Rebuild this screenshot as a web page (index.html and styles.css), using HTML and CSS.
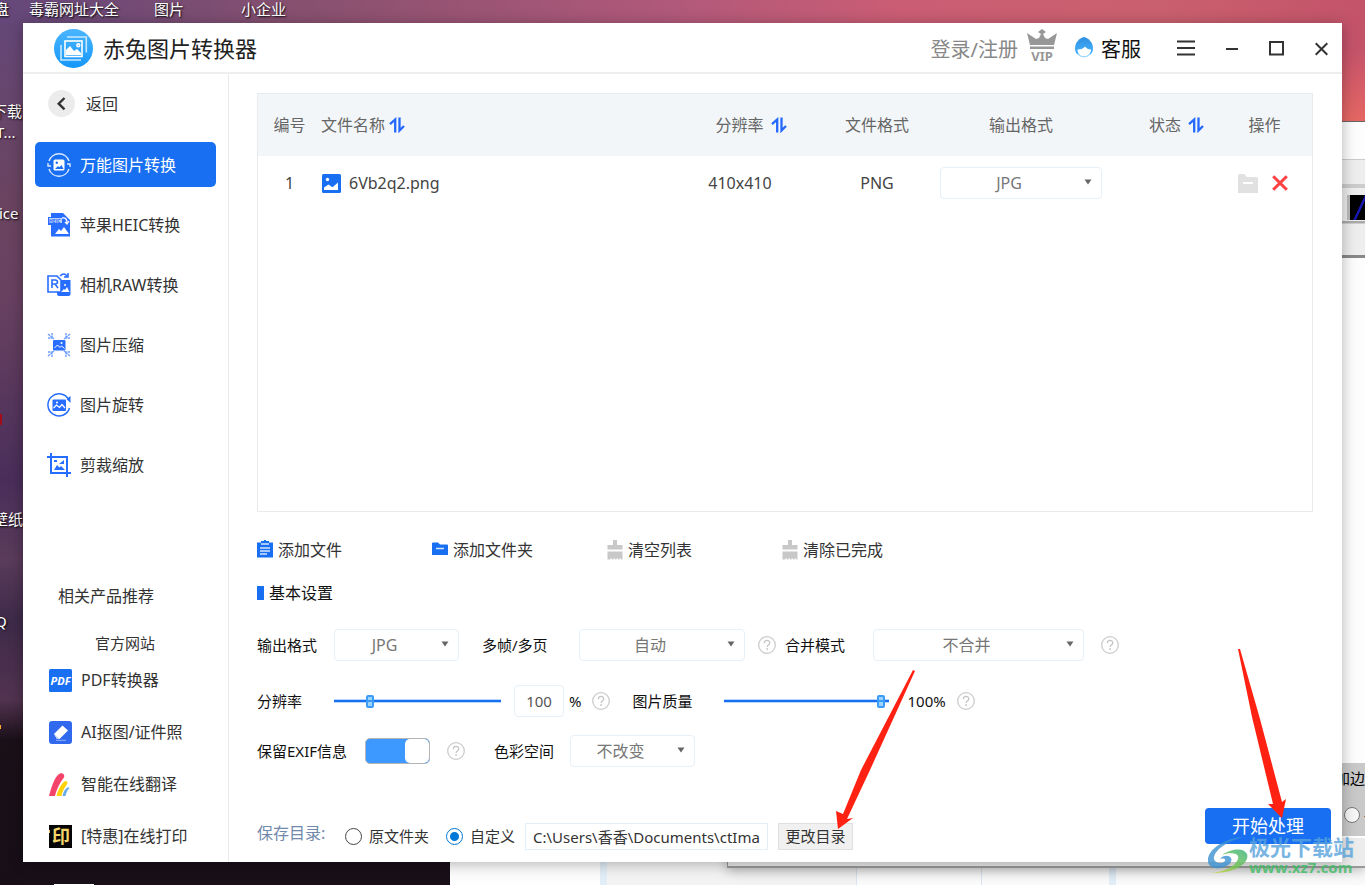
FILE: index.html
```html
<!DOCTYPE html>
<html lang="zh-CN">
<head>
<meta charset="utf-8">
<title>赤兔图片转换器</title>
<link rel="stylesheet" href="styles.css">
</head>
<body>
<svg class="defs" aria-hidden="true">
  <defs>
    <linearGradient id="logoFill" x1="0" y1="0" x2="0" y2="1"><stop offset="0" stop-color="#4ab5ff"/><stop offset="1" stop-color="#1597f7"/></linearGradient>
    <linearGradient id="hairFill" x1="0" y1="0" x2="0" y2="1"><stop offset="0" stop-color="#2f8fe0"/><stop offset="1" stop-color="#45b4ff"/></linearGradient>
    <linearGradient id="leafFill" x1="0" y1="1" x2="1" y2="0"><stop offset="0" stop-color="#d8d63c"/><stop offset=".5" stop-color="#6fc452"/><stop offset="1" stop-color="#2fae7a"/></linearGradient>
    <symbol id="sort" viewBox="0 0 16 16"><path d="M6.200 15.500V2.500L1 7.200" fill="none" stroke="#2468ff" stroke-width="2.300"/><path d="M10.500.5V13.500L15 9" fill="none" stroke="#2468ff" stroke-width="2.300"/></symbol>
    <symbol id="caret" viewBox="0 0 8 6"><path d="M.5.5h7L4 5.500z" fill="#666"/></symbol>
    <symbol id="help" viewBox="0 0 18 18"><circle cx="9" cy="9" r="8.300" fill="none" stroke="#ccc" stroke-width="1.300"/><path d="M6.300 7.200C6.300 3.600 11.700 3.600 11.700 7c0 2-2.600 2-2.600 4" fill="none" stroke="#c4c4c4" stroke-width="1.300"/><circle cx="9.100" cy="13" r=".9" fill="#c4c4c4"/></symbol>
    <symbol id="brush" viewBox="0 0 16 20"><path d="M6 0h4v5h5.500v4.500H.5V5H6zM.5 11.500h15V19.500h-1.500v-1h-1.500v1h-1.500v-1H9.500v1H8v-1H6.500v1H5v-1H3.500v1H.5z" fill="#c8c8c8"/></symbol>
  </defs>
</svg>
<div class="desktop">
  <span class="shortcut s1">盘</span>
  <span class="shortcut s2">毒霸网址大全</span>
  <span class="shortcut s3">图片</span>
  <span class="shortcut s4">小企业</span>
  <span class="shortcut s5">下载</span>
  <span class="shortcut s6">T...</span>
  <span class="shortcut s7">ice</span>
  <span class="shortcut s8">壁纸</span>
  <span class="shortcut s9">Q</span>
  <i class="speck speck-red"></i>
  <i class="speck speck-orange"></i>
  <i class="speck speck-white"></i>

  <div class="back-window">
    <div class="back-strip"></div>
    <div class="back-tools"><i class="back-swatch"></i></div>
    <div class="back-strip tall"></div>
  </div>
  <div class="back-grid"><i></i><i></i><i></i></div>
  <div class="back-dialog"></div>
  <div class="back-panel">
    <span>加边</span>
    <label class="back-option"><input type="radio" aria-label="加边">-</label>
  </div>

  <main class="window">
    <header class="titlebar">
      <svg class="logo" viewBox="0 0 39 39" aria-hidden="true"><circle cx="19.500" cy="19.500" r="19.500" fill="url(#logoFill)"/><g fill="none" stroke="#fff" stroke-width="1.600"><rect x="11" y="12" width="17" height="15.500"/><path d="M13 8h19.300v15.500M7 16v15h20" stroke="#c6e8ff"/><circle cx="24.300" cy="16.300" r="1.400"/></g><path d="M12 26v-5l4-4 4 5 3-2 4 4v2z" fill="#fff"/></svg>
      <h1>赤兔图片转换器</h1>
      <a class="login" href="#">登录/注册</a>
      <svg class="vip" viewBox="0 0 32 34" role="img" aria-label="VIP"><path d="M1 4l3 2 6 4 3-1 2-4-3-2 4-3 4 3-3 2 2 4 3 1 6-4 3-2-3 12H4zM4 17.500h24V20H4z" fill="#979797"/><text x="16" y="32" text-anchor="middle">VIP</text></svg>
      <a class="service" href="#"><svg viewBox="0 0 18 21" aria-hidden="true"><path d="M9 0C5 1 0 5 0 11.500 0 14 .8 16 2.500 17.500h13C17.200 16 18 14 18 11.500 18 5 13 1 9 0z" fill="url(#hairFill)"/><path d="M2.500 12.500c4 0 6-1 7.500-3 1.500 2 3.500 2.800 6 3 0 4-3 7-6.800 7S2.500 16.500 2.500 12.500z" fill="#fff"/><path d="M3 16.500c2.500 4.300 9.500 4.300 12 0M8 20h2" fill="none" stroke="#9bd3fb" stroke-width="1.200"/></svg>客服</a>
      <div class="controls">
        <button aria-label="菜单"><svg width="18" height="16" viewBox="0 0 18 16"><path d="M0 1.500h18M0 8h18M0 14.500h18"/></svg></button>
        <button aria-label="最小化"><svg width="12" height="16" viewBox="0 0 12 16"><path d="M0 9h12"/></svg></button>
        <button aria-label="最大化"><svg width="15" height="16" viewBox="0 0 15 16"><path d="M1 2h13v12.500H1z"/></svg></button>
        <button aria-label="关闭"><svg width="13" height="16" viewBox="0 0 13 16"><path d="M.7 3.200l11.600 11.600M12.300 3.200.7 14.800"/></svg></button>
      </div>
    </header>

    <div class="body">
      <aside class="sidebar">
        <button class="back"><svg viewBox="0 0 27 27" aria-hidden="true"><circle cx="13.500" cy="13.500" r="13.500" fill="#ececec"/><path d="M16.500 8l-5.800 5.700 5.800 5.700" fill="none" stroke="#333" stroke-width="2.400"/></svg>返回</button>
        <nav class="nav">
          <a class="active" href="#"><svg viewBox="0 0 24 24" aria-hidden="true"><path d="M2 8A10.500 10.500 0 0 1 22 8M22 16A10.500 10.500 0 0 1 2 16M1 10v3h3M23 14v-3h-3" fill="none" stroke="#dcebff" stroke-width="1.400"/><rect x="6.500" y="6.500" width="11" height="11" rx="1.500" fill="#fff"/><circle cx="9.800" cy="9.800" r="1.200" fill="#186ff2"/><path d="M8 16l3-3 1.500 1.300L14.500 12l2 4z" fill="#186ff2"/></svg>万能图片转换</a>
          <a href="#"><svg viewBox="0 0 24 24" aria-hidden="true"><path d="M4 0h12l7 7v16.500H4V12H1V4h3z" fill="#276dff"/><path d="M2 5h13v5H2z" fill="#b8ceff"/><text class="tiny" x="2" y="10">HEIC</text><path d="M15 5c4-1 5 2 5 5M18 9l2 2 2-3" fill="none" stroke="#fff" stroke-width="1.300"/><path d="M8 21l4-5 2 2 3-4 5 7z" fill="#fff"/></svg>苹果HEIC转换</a>
          <a href="#"><svg viewBox="0 0 24 24" aria-hidden="true"><path d="M10 10l2-3h11.500v14q0 2-2 2H12q-2 0-2-2z" fill="#276dff"/><path d="M1 3h9l4 4v12H1z" fill="#fff" stroke="#276dff" stroke-width="1.600"/><path d="M5 15V7h3q2.500 0 2.500 2T8 11H5m3 0 3 4" fill="none" stroke="#276dff" stroke-width="1.600"/><path d="M13 3q4-4 7 0M21 0v4h-4" fill="none" stroke="#276dff" stroke-width="1.500"/><path d="M14 19l3-3 1 1 2-3 2.500 5z" fill="#fff"/><circle cx="18" cy="12" r="1" fill="#fff"/></svg>相机RAW转换</a>
          <a href="#"><svg viewBox="0 0 24 24" aria-hidden="true"><rect x="6" y="7" width="12.500" height="10.500" rx="1" fill="#276dff"/><path d="M7.500 15l3-3 2.500 2.500 1.500-1.500 3 2.500" stroke="#fff" fill="none"/><circle cx="14.500" cy="10" r="1" fill="#fff"/><g fill="none" stroke="#70a0ff" stroke-width="1.400" stroke-dasharray="2.500 .6"><path d="M1 1l6 5M1 5h5M5 0v6M23 1l-6 5M23 5h-5M19 0v6M1 23l6-5M1 19h5M5 24v-6M23 23l-6-5M23 19h-5M19 24v-6"/></g></svg>图片压缩</a>
          <a href="#"><svg viewBox="0 0 24 24" aria-hidden="true"><path d="M21.800 7A11 11 0 1 0 22.500 15" fill="none" stroke="#276dff" stroke-width="1.500"/><path d="M23.500 3v7l-4-4z" fill="#276dff"/><rect x="5.500" y="6.500" width="13.500" height="11.500" rx="1" fill="#276dff"/><path d="M6.500 15l3-3 3 2.500 2.500-3 3 3.500" stroke="#fff" fill="none" stroke-width="1.200"/><circle cx="10" cy="9.500" r="1" fill="#fff"/></svg>图片旋转</a>
          <a href="#"><svg viewBox="0 0 24 24" aria-hidden="true"><path d="M0 4h20v20M4 0v20h20" fill="none" stroke="#276dff" stroke-width="2"/><path d="M7 17l3-5 2.500 2.500L14 13l4 4z" fill="#276dff"/><path d="M12 11l5-4v4zM7 7h3v2H7z" fill="#276dff"/></svg>剪裁缩放</a>
        </nav>
        <section class="related">
          <h2>相关产品推荐</h2>
          <a class="official" href="#">官方网站</a>
          <a href="#"><svg viewBox="0 0 23 23" aria-hidden="true"><rect width="23" height="23" rx="1.500" fill="#186ff2"/><text class="pdf" x="11.500" y="16" text-anchor="middle">PDF</text></svg>PDF转换器</a>
          <a href="#"><svg viewBox="0 0 23 23" aria-hidden="true"><rect width="23" height="23" rx="3" fill="#3069ee"/><path d="M5 13l8.500-8.500 5.500 5-8.500 8.500H8z" fill="#fff"/><path d="M5 13l5.500 5H8z" fill="#b9cdfc"/><path d="M7 19.300h10" stroke="#91afff"/></svg>AI抠图/证件照</a>
          <a href="#"><svg viewBox="0 0 23 23" aria-hidden="true"><path d="M0 23C3 11 7 2 11 .5c3-1 5 1 4 4C12 8 8 15 6 23z" fill="#f5446a"/><path d="M7.500 23c2-8 6-14 9-15 2 0 2.500 2 1 4-2 3-4 6-5 11z" fill="#ffd20a"/><path d="M13.500 23c1-5 3-8 6-9l1 1c-2 2-3 4-4 8z" fill="#69aae8"/></svg>智能在线翻译</a>
          <a href="#"><svg viewBox="0 0 23 23" aria-hidden="true"><rect width="23" height="23" fill="#050505"/><text class="seal" x="12" y="18" text-anchor="middle">印</text><path d="M0 5h1v3H0z" fill="#e9ce63"/></svg>[特惠]在线打印</a>
        </section>
      </aside>

      <section class="main">
        <div class="content">
          <div class="filelist">
            <table>
              <colgroup><col class="c-no"><col><col class="c-res"><col class="c-type"><col class="c-out"><col class="c-state"><col class="c-ops"></colgroup>
              <thead><tr>
                <th>编号</th>
                <th class="name">文件名称 <svg class="sort"><use href="#sort"/></svg></th>
                <th class="res">分辨率 <svg class="sort wide"><use href="#sort"/></svg></th>
                <th>文件格式</th><th>输出格式</th>
                <th class="state">状态 <svg class="sort wide"><use href="#sort"/></svg></th>
                <th>操作</th>
              </tr></thead>
              <tbody><tr>
                <td>1</td>
                <td class="name"><span class="file"><svg viewBox="0 0 19 19" aria-hidden="true"><rect width="19" height="19" rx="1.500" fill="#186ff2"/><circle cx="5.500" cy="5.500" r="1.700" fill="#fff"/><path d="M2 16v-2.500l4.500-3 4 2.700L16 8.500V16z" fill="#fff"/></svg>6Vb2q2.png</span></td>
                <td>410x410</td><td>PNG</td>
                <td><span class="select"><select aria-label="输出格式"><option>JPG</option></select><svg><use href="#caret"/></svg></span></td>
                <td></td>
                <td><span class="ops"><button aria-label="打开文件夹"><svg width="20" height="19" viewBox="0 0 20 19"><path d="M0 2q0-2 2-2h4l3 3h9.500Q20 3 20 4.500V19H0z" fill="#e1e1e1"/><path d="M5 9h10" stroke="#fff" stroke-width="2"/></svg></button><button aria-label="删除"><svg width="16" height="16" viewBox="0 0 16 16"><path d="M1.200 1.200l13.600 13.600M14.800 1.200l-13.600 13.600" stroke="#ff4141" stroke-width="3"/></svg></button></span></td>
              </tr></tbody>
            </table>
          </div>

          <div class="toolbar">
            <button><svg viewBox="0 0 16 20" aria-hidden="true"><path d="M0 2.500h4V1h3V0h2v1h3v1.500h4v15H0z" fill="#186ff2"/><path d="M4 4h8M3 8h10M3 11h10M3 14h7" stroke="#d5e6ff" stroke-width="1.300"/></svg>添加文件</button>
            <button><svg viewBox="0 0 16 20" aria-hidden="true"><path d="M0 3.500q0-1 1-1h5l2 2h7q1 0 1 1v9.500H0z" fill="#186ff2"/><path d="M4 8.500h8" stroke="#d5e6ff" stroke-width="1.500"/></svg>添加文件夹</button>
            <button><svg aria-hidden="true"><use href="#brush"/></svg>清空列表</button>
            <button><svg aria-hidden="true"><use href="#brush"/></svg>清除已完成</button>
          </div>

          <h2 class="section-title">基本设置</h2>

          <div class="row">
            <label class="first" for="format">输出格式</label>
            <span class="select w-small"><select id="format"><option>JPG</option></select><svg><use href="#caret"/></svg></span>
            <label class="frames" for="frames">多帧/多页</label>
            <span class="select w-mid"><select id="frames"><option>自动</option></select><svg><use href="#caret"/></svg></span>
            <svg class="help"><use href="#help"/></svg>
            <label class="merge" for="merge">合并模式</label>
            <span class="select w-large"><select id="merge"><option>不合并</option></select><svg><use href="#caret"/></svg></span>
            <svg class="help far"><use href="#help"/></svg>
          </div>
          <div class="row second">
            <label class="first" for="scale">分辨率</label>
            <input class="slider" id="scale" type="range" value="20">
            <input class="percent" type="text" value="100" aria-label="分辨率百分比">
            <span class="unit">%</span>
            <svg class="help near"><use href="#help"/></svg>
            <label class="quality" for="quality">图片质量</label>
            <input class="slider" id="quality" type="range" value="97">
            <output class="quality-value" for="quality">100%</output>
            <svg class="help near"><use href="#help"/></svg>
          </div>
          <div class="row third">
            <label class="exif" for="exif">保留EXIF信息</label>
            <input class="switch" id="exif" type="checkbox" checked>
            <svg class="help far"><use href="#help"/></svg>
            <label class="space" for="space">色彩空间</label>
            <span class="select w-small"><select id="space"><option>不改变</option></select><svg><use href="#caret"/></svg></span>
          </div>
        </div>

        <footer class="footer">
          <div class="save">
            <span class="save-label">保存目录:</span>
            <label class="radio"><input type="radio" name="dir">原文件夹</label>
            <label class="radio"><input type="radio" name="dir" checked>自定义</label>
            <input class="path" type="text" value="C:\Users\香香\Documents\ctImage" aria-label="保存路径">
            <button class="change">更改目录</button>
          </div>
          <button class="start">开始处理</button>
        </footer>
      </section>
    </div>
  </main>

  <svg class="arrow arrow-a" width="80" height="160" viewBox="0 0 80 160" aria-hidden="true"><path d="M78 0 26 100 8 144 1 141 3 159 18 148 12 149 35 100 80 1z"/></svg>
  <svg class="arrow arrow-b" width="50" height="170" viewBox="0 0 50 170" aria-hidden="true"><path d="M0 0 14 68 35 155 30 155 44 169 48 150 44 153 22 70 2 0z"/></svg>
  <div class="mark">
    <svg viewBox="0 0 42 40" aria-hidden="true"><path d="M37 1C20 1 0 13 1 25c0 5 5 8 12 7 8-1 13-6 11-10-2-3-8-3-11 1 4-1 6 0 5 2-2 3-10 3-11-2C6 15 20 5 37 1z" fill="#3b92d2"/><path d="M15 19c6-5 21-9 25-1 3 9-12 20-36 19 12-1 24-6 27-14 2-6-8-7-16-4z" fill="url(#leafFill)"/></svg>
    <div><strong>极光下载站</strong><span>www.xz7.com</span></div>
  </div>
</div>
</body>
</html>
```

FILE: styles.css
```css
* { box-sizing: border-box; }
body { margin: 0; font: 16px/24px "Noto Sans", "Noto Sans CJK SC", sans-serif; color: #333; }
button, input, select { font: inherit; color: inherit; margin: 0; }
button { padding: 0; border: 0; background: none; cursor: pointer; }
a { color: inherit; text-decoration: none; }
h1, h2 { margin: 0; font-weight: 400; }
svg { flex: none; display: block; }
.defs { position: absolute; width: 0; height: 0; }

.desktop {
  position: relative; height: 100vh; overflow: hidden;
  background:
    linear-gradient(90deg, #64477a 0, #87506f 22%, #b2597a 50%, #ca5d74 66%, #c9606e 85%, #c4536a 100%) top / 100% 23px no-repeat,
    linear-gradient(#64477a 0, #6a4460 200px, #684161 300px, #4a2e5a 480px, #5a3b5b 560px, #3e2a4a 620px, #523350 700px, #1a1018 740px, #170e17 100%) left / 23px 100% no-repeat,
    linear-gradient(#c4536a 20px, #c4536a 50px, #e56763 121px) right top / 23px 121px no-repeat,
    #180f18;
}
.shortcut { position: absolute; font-size: 15px; line-height: 20px; color: #fff; white-space: nowrap; text-shadow: 1px 1px 2px #000; }
.s1 { left: -6px; top: -1px; }
.s2 { left: 29px; top: -1px; }
.s3 { left: 154px; top: -1px; }
.s4 { left: 241px; top: -1px; }
.s5 { left: -8px; top: 101px; }
.s6 { left: -4px; top: 122px; }
.s7 { left: -1px; top: 203px; }
.s8 { left: -7px; top: 509px; }
.s9 { left: -5px; top: 611px; }
.speck { position: absolute; }
.speck-red { left: 0; top: 414px; width: 2px; height: 11px; background: #a00c18; }
.speck-orange { left: 0; top: 725px; width: 1px; height: 4px; background: #ffa62b; }
.speck-white { left: 54px; bottom: 0; width: 40px; height: 1px; background: #fff; }

.back-window { position: absolute; left: 450px; right: 0; top: 121px; bottom: 0; background: #fdfdfd; padding-top: 37px; border-top: 1px solid #666; }
.back-strip { height: 26px; background: #eee; border-top: 1px solid #ccc; border-bottom: 1px solid #ccc; }
.back-tools { height: 38px; padding: 10px 0 0; background: #eee; border-bottom: 2px solid #aaa; border-top: 3px solid #ccc; display: flex; justify-content: flex-end; }
.back-swatch { width: 18px; height: 25px; margin-top: -3px; border-left: 3px solid #bbb; background: linear-gradient(115deg, #000 55%, #1818b0 57%, #1818b0 65%, #000 67%); }
.back-strip.tall { height: 35px; border-bottom: 3px solid #888; }
.back-grid { position: absolute; left: 600px; right: 0; bottom: 0; height: 24px; display: flex; background: #fafafa; border-left: 7px solid #e1edf7; }
.back-grid i { width: 250px; background: #f3f3f3; border-right: 1px solid #d9e4f0; }
.back-grid i + i { width: 125px; background: #fafafa; }
.back-grid i:last-child { width: 134px; border-right: 7px solid #e1edf7; }
.back-dialog { position: absolute; left: 727px; right: 0; bottom: 17px; height: 30px; background: #ececec; border: solid #999; border-width: 0 0 2px 1px; box-shadow: 0 3px 12px rgba(0,0,0,.25); }
.back-panel { position: absolute; right: 0; top: 763px; width: 30px; height: 75px; padding-top: 3px; background: #c9c9c9; border-bottom: 2px solid #fff; font-size: 15px; color: #000; white-space: nowrap; overflow: hidden; display: flex; flex-direction: column; gap: 13px; }
.back-option { display: flex; align-items: center; gap: 4px; padding-left: 9px; }
.back-option input { appearance: none; flex: none; width: 16px; height: 16px; border: 1px solid #777; border-radius: 50%; background: #f7f7f7; }

.window { position: absolute; inset: 23px; display: flex; flex-direction: column; background: #fff; box-shadow: 0 2px 14px rgba(0,0,0,.3); }
.titlebar { height: 51px; flex: none; display: flex; align-items: center; padding: 1px 14px 0 31px; border-bottom: 2px solid #eee; }
.logo { width: 39px; height: 39px; margin-right: 10px; }
.titlebar h1 { font-size: 22px; line-height: 32px; color: #222; margin-right: auto; }
.login { font-size: 20px; color: #888; padding-top: 3px; }
.vip { width: 32px; height: 34px; margin: 0 17px 4px 8px; }
.vip text { font: 700 13px "Noto Sans", sans-serif; fill: #979797; }
.service { display: flex; align-items: center; gap: 8px; font-size: 20px; color: #111; margin-right: 36px; padding-top: 3px; }
.service svg { width: 18px; height: 21px; margin-bottom: 4px; }
.controls { display: flex; align-items: center; gap: 31px; }
.controls svg { fill: none; stroke: #333; stroke-width: 2; }

.body { flex: 1; min-height: 0; display: flex; }
.sidebar { width: 206px; flex: none; display: flex; flex-direction: column; padding: 16px 12px 8px; border-right: 1px solid #e9e9e9; }
.back { display: flex; align-items: center; gap: 11px; margin-left: 13px; align-self: flex-start; }
.back svg { width: 27px; height: 27px; }
.nav { display: flex; flex-direction: column; gap: 15px; margin-top: 25px; }
.nav a { display: flex; align-items: center; gap: 9px; height: 45px; padding-left: 12px; border-radius: 5px; }
.nav svg { width: 24px; height: 24px; }
.nav .active { background: #186ff2; color: #fff; }
.tiny { font: 700 5px "Open Sans", sans-serif; fill: #276dff; }
.related { margin-top: auto; display: flex; flex-direction: column; gap: 16px; padding-left: 14px; }
.related h2 { font-size: 16px; padding-left: 9px; }
.related a { display: flex; align-items: center; gap: 9px; height: 36px; }
.related .official { font-size: 15px; line-height: 20px; height: 20px; margin: 9px 0 -7px 46px; }
.related svg { width: 23px; height: 23px; }
.pdf { font: italic 700 11px "Open Sans", sans-serif; fill: #fff; }
.seal { font: 700 18px "Noto Sans CJK SC", sans-serif; fill: #f3d66a; }

.main { flex: 1; min-width: 0; display: flex; flex-direction: column; }
.content { flex: 1; min-height: 0; display: flex; flex-direction: column; padding: 19px 29px 41px 28px; }
.filelist { flex: 1; border: 1px solid #e8eaec; }
table { width: 100%; table-layout: fixed; border-collapse: collapse; text-align: center; }
th, td { padding: 0; font-weight: 400; }
th { height: 62px; background: #f2f6f9; color: #666; }
td { height: 54px; color: #444; }
.c-no { width: 63px; }
.c-res { width: 148px; }
.c-type { width: 126px; }
.c-out { width: 162px; }
.c-state { width: 115px; }
.c-ops { width: 95px; }
.name { text-align: left; }
.res { padding-left: 22px; }
.state { padding-left: 34px; }
.sort { display: inline-block; width: 16px; height: 16px; vertical-align: -2px; }
.sort.wide { margin-left: 3px; }
.file { display: flex; align-items: center; gap: 8px; padding-left: 1px; }
.file svg { width: 19px; height: 19px; }
.ops { display: flex; align-items: center; justify-content: center; gap: 14px; padding-right: 4px; }

.select { position: relative; display: block; }
.select select { appearance: none; display: block; width: 100%; height: 32px; padding: 0 24px 0 0; border: 1px solid #e6f0f8; border-radius: 4px; background: #fff; color: #777; text-align: center; text-align-last: center; }
.select svg { position: absolute; right: 10px; top: 12px; width: 8px; height: 6px; pointer-events: none; }
.w-small { width: 125px; }
.w-mid { width: 166px; }
.w-large { width: 211px; }

.toolbar { display: flex; margin-top: 22px; }
.toolbar button { width: 175px; height: 32px; display: flex; align-items: center; gap: 5px; }
.toolbar svg { width: 16px; height: 20px; }
.section-title { display: flex; align-items: center; gap: 5px; margin-top: 15px; font-size: 16px; color: #111; }
.section-title::before { content: ""; width: 7px; height: 14px; background: #186ff2; }

.row { display: flex; align-items: center; height: 32px; margin-top: 24px; font-size: 15px; color: #111; white-space: nowrap; }
.row.third { margin-top: 18px; }
.row .select { font-size: 16px; }
.first { width: 77px; }
.frames { width: 97px; margin-left: 23px; }
.help { width: 18px; height: 18px; margin-left: 13px; }
.help.near { margin-left: 11px; }
.help.far { margin-left: 17px; }
.merge { width: 88px; margin-left: 9px; }
.slider { appearance: none; width: 167px; height: 14px; background: linear-gradient(#186ff2, #186ff2) center / 100% 2px no-repeat, linear-gradient(#b9d8ff, #b9d8ff) center / 100% 4px no-repeat; }
.slider::-webkit-slider-thumb { appearance: none; width: 8px; height: 13px; border: 2px solid #3d9bf8; border-radius: 2px; background: linear-gradient(#9bd5ff 35%, #3d9bf8 35% 60%, #9bd5ff 60%); }
#quality { width: 165px; }
.percent { width: 50px; height: 32px; margin-left: 13px; padding: 0; border: 1px solid #e6f0f8; border-radius: 4px; text-align: center; color: #555; }
.unit { margin-left: 5px; }
.quality { width: 92px; margin-left: 22px; }
.quality-value { margin-left: 18px; }
.exif { width: 108px; }
.switch { appearance: none; width: 65px; height: 26px; border: 1px solid #b5b5b5; border-radius: 5px; background: #b5b5b5; display: flex; justify-content: flex-start; overflow: hidden; }
.switch::after { content: ""; width: 24px; border-radius: 5px; background: #fff; }
.switch:checked { background: #3d98ff; justify-content: flex-end; }
.space { width: 76px; margin-left: 29px; }

.footer { display: flex; align-items: flex-end; justify-content: space-between; height: 54px; padding: 0 11px 12px 28px; font-size: 15px; white-space: nowrap; }
.save { display: flex; align-items: center; height: 28px; }
.save-label { width: 88px; padding-bottom: 7px; font-size: 16px; color: #7189ab; }
.radio { display: flex; align-items: center; gap: 7px; margin-right: 17px; }
.radio input { appearance: none; width: 17px; height: 17px; border: 1px solid #444; border-radius: 50%; }
.radio input:checked { border: 1px solid #0078d7; background: radial-gradient(circle, #0078d7 4px, #fff 5px); }
.radio + .radio { margin-right: 10px; }
.path { width: 243px; height: 27px; padding: 0 7px; border: 1px solid #e2eef8; background: #fff; }
.change { width: 75px; height: 27px; margin-left: 10px; background: #f0f0f0; border: 1px solid #e0e0e0; }
.start { align-self: flex-start; width: 126px; height: 36px; border-radius: 4px; background: #186ff2; color: #fff; font-size: 18px; }

.arrow { position: absolute; fill: #ff2112; pointer-events: none; }
.arrow-a { left: 835px; top: 670px; }
.arrow-b { left: 1238px; top: 649px; }
.mark { position: absolute; right: 11px; bottom: 8px; display: flex; align-items: center; opacity: .8; pointer-events: none; }
.mark svg { width: 42px; height: 40px; }
.mark div { display: flex; flex-direction: column; }
.mark strong { font: 700 21px/22px "Noto Sans CJK SC", sans-serif; color: #57a3dc; }
.mark span { font: 700 15px/20px "Open Sans", sans-serif; color: #3dbb63; }
```
